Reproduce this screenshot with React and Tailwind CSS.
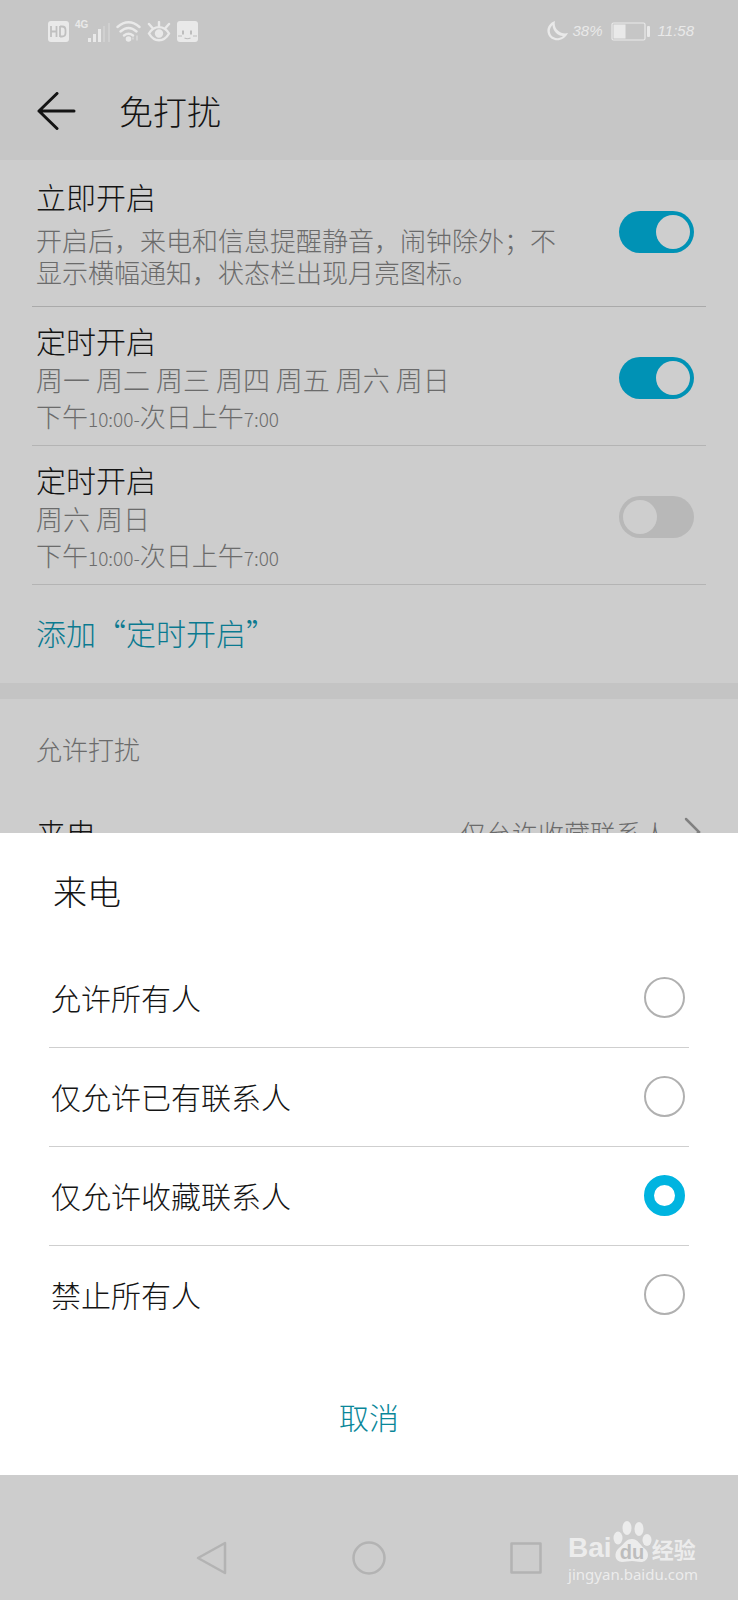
import React, { useState } from 'react';

const schedules = [
  { id: 1, days: '周一 周二 周三 周四 周五 周六 周日', on: true },
  { id: 2, days: '周六 周日', on: false },
];

const callOptions = ['允许所有人', '仅允许已有联系人', '仅允许收藏联系人', '禁止所有人'];

const StatusBar = () => (
  <div className="flex h-[62px] items-center justify-between pl-12 pr-11 text-[#e9e9e9]">
    <div className="flex items-center gap-[6px]">
      {/* HD badge */}
      <svg width="21" height="21" viewBox="0 0 21 21" aria-hidden="true">
        <rect width="21" height="21" rx="3" fill="currentColor" />
        <path d="M3 5v11M8.500 5v11M3 10.500h5.500M12 5v11M12 5.500h2q3.500 0 3.500 3.500v3q0 3.500-3.500 3.500h-2" fill="none" stroke="#c0c0c0" strokeWidth="1.800" />
      </svg>
      {/* signal */}
      <div className="flex h-6 items-end">
        <span className="self-start font-['Liberation_Sans',sans-serif] text-[10px] font-bold leading-3">4G</span>
        <svg width="22" height="20" viewBox="0 0 22 20" className="shrink-0" aria-hidden="true">
          <g fill="currentColor">
            <rect x="0" y="15" width="3" height="4" />
            <rect x="5" y="11" width="3" height="8" />
            <rect x="10" y="6" width="3" height="13" />
            <rect x="15" y="3" width="2" height="16" opacity="0.3" />
            <rect x="20" y="0" width="2" height="19" opacity="0.3" />
          </g>
        </svg>
      </div>
      <svg width="25" height="21" viewBox="0 0 25 21" fill="none" stroke="currentColor" strokeWidth="2.400" strokeLinecap="round" aria-hidden="true">
        <path d="M1.500 6Q12.500-3.500 23.500 6M4.500 10.500q8-7 16 0M8 14.500q4.500-3.500 9 0" />
        <circle cx="12.500" cy="18" r="1.600" fill="currentColor" />
        <path d="M17 18v-1M21 19v-4" strokeWidth="1.500" opacity="0.600" />
      </svg>
      <svg width="24" height="21" viewBox="0 0 24 21" fill="none" stroke="currentColor" strokeWidth="2.400" strokeLinecap="round" aria-hidden="true">
        <path d="M2 12.500C7 4 17 4 22 12.500C17 21.500 7 21.500 2 12.500zM12 5V1M5.500 7 2 3M18.500 7 22 3" />
        <circle cx="12" cy="12.500" r="3" fill="currentColor" />
      </svg>
      <svg width="21" height="21" viewBox="0 0 21 21" aria-hidden="true">
        <rect width="21" height="21" rx="3" fill="currentColor" />
        <path d="M6 9.500v4M14 9.500v4" stroke="#bdbdbd" strokeWidth="2" />
        <path d="M1 15h4M16 15h4M7.500 17q3 1.500 6 0" stroke="#bdbdbd" strokeWidth="1.200" fill="none" />
      </svg>
    </div>
    <div className="flex items-center gap-2 font-['Liberation_Sans',sans-serif] text-[15px] italic">
      <div className="flex items-center gap-1">
        <svg width="22" height="20" viewBox="0 0 22 20" fill="currentColor" aria-hidden="true">
          <path fillRule="evenodd" d="M8 0C2 2-1 8 1 13c3 8 15 9 20-1-7 2-15-4-13-12zM5.500 4C2.500 7 2 11 4 14c3 4 9 4 12 1C10 14.500 6 10 5.500 4z" />
        </svg>
        <span>38%</span>
      </div>
      <svg width="39" height="19" viewBox="0 0 39 19" aria-hidden="true">
        <rect x="1" y="1" width="33" height="17" rx="1.500" fill="none" stroke="currentColor" strokeWidth="1.200" />
        <rect x="2.500" y="2.500" width="12" height="14" fill="currentColor" />
        <rect x="36" y="4" width="3" height="11" rx="1" fill="currentColor" />
      </svg>
      <span>11:58</span>
    </div>
  </div>
);

const Toggle = ({ id, defaultChecked }) => (
  <input
    id={id}
    type="checkbox"
    role="switch"
    defaultChecked={defaultChecked}
    className="flex h-[42px] w-[75px] shrink-0 cursor-pointer appearance-none items-center rounded-full bg-[#b8b8b8] p-1 before:h-[34px] before:w-[34px] before:rounded-full before:bg-[#cecece] checked:justify-end checked:bg-[#0092b5]"
  />
);

// digits run narrower than the characters around them
const Time = ({ children }) => <span className="text-[19px] leading-none">{children}</span>;

const ScheduleRow = ({ item }) => (
  <div className="flex items-center justify-between border-b border-[#b4b4b4] pb-[11px] pl-1 pr-3 pt-[15px]">
    <label htmlFor={`schedule-${item.id}`}>
      <span className="block text-[30px] leading-9 text-[#141414]">定时开启</span>
      <span className="mt-1 block text-[27px] leading-9 text-[#6b6b6b]">{item.days}</span>
      <span className="block text-[26px] leading-9 text-[#6b6b6b]">
        下午<Time>10:00-</Time>次日上午<Time>7:00</Time>
      </span>
    </label>
    <Toggle id={`schedule-${item.id}`} defaultChecked={item.on} />
  </div>
);

const Watermark = () => (
  <div className="absolute bottom-4 right-10 text-[#ececec]">
    <div className="flex items-end">
      <span className="font-['Liberation_Sans',sans-serif] text-[28px] font-bold leading-8">Bai</span>
      <svg width="40" height="44" viewBox="0 0 40 44" className="shrink-0" aria-hidden="true">
        <g fill="currentColor">
          <ellipse cx="6" cy="18" rx="4.500" ry="6.500" />
          <ellipse cx="15" cy="8" rx="4.500" ry="7" />
          <ellipse cx="27" cy="9" rx="4.500" ry="7" />
          <ellipse cx="35" cy="20" rx="4.500" ry="6" />
          <path d="M20 19c6 0 8 6 12 9 7 5 4 14-3 14-4 0-5-1-9-1s-6 1-10 1c-7 0-9-9-3-14 5-4 7-9 13-9z" />
        </g>
        <text x="20" y="39" textAnchor="middle" fontFamily="Liberation Sans" fontWeight="bold" fontSize="20" fill="#bdbdbd">du</text>
      </svg>
      <span className="text-[22px] font-bold leading-8">经验</span>
    </div>
    <p className="font-['Noto_Sans','Open_Sans',sans-serif] text-[15px] font-normal leading-5">jingyan.baidu.com</p>
  </div>
);

const App = () => {
  const [selected, setSelected] = useState('仅允许收藏联系人');

  return (
    <div className="relative min-h-screen overflow-hidden bg-[#cdcdcd] font-['Noto_Sans_CJK_SC',sans-serif] font-light text-[#141414]">
      {/* Header */}
      <header className="bg-[#c6c6c6]">
        <StatusBar />
        <div className="flex h-[98px] items-center gap-[42px] pl-[37px]">
          <button aria-label="返回" className="cursor-pointer">
            <svg width="40" height="38" viewBox="0 0 40 38" fill="none" stroke="#141414" strokeWidth="3" strokeLinecap="round" strokeLinejoin="round">
              <path d="M20 1.500 2 19l18 17.500M2 19h35" />
            </svg>
          </button>
          <h1 className="text-[34px] leading-[44px]">免打扰</h1>
        </div>
      </header>

      <main>
        <section className="px-8">
          <div className="flex items-center justify-between gap-12 border-b border-[#aaaaaa] pb-[18px] pl-1 pr-3 pt-4">
            <label htmlFor="dnd-now">
              <span className="block text-[30px] leading-10">立即开启</span>
              <span className="mt-2 block text-[26px] leading-8 text-[#6b6b6b]">
                开启后，来电和信息提醒静音，闹钟除外；不显示横幅通知，状态栏出现月亮图标。
              </span>
            </label>
            <Toggle id="dnd-now" defaultChecked />
          </div>
          {schedules.map((item) => (
            <ScheduleRow key={item.id} item={item} />
          ))}
          <button className="block h-[98px] cursor-pointer pb-1 pl-1 text-left text-[30px] text-[#0b7a90]">添加“定时开启”</button>
        </section>

        <div className="h-4 bg-[#c4c4c4]" />

        <section className="px-8">
          <h2 className="pl-1 pt-8 text-[26px] leading-9 text-[#6b6b6b]">允许打扰</h2>
          <button className="flex h-[130px] w-full cursor-pointer items-center justify-between pl-1 pr-1">
            <span className="text-[30px]">来电</span>
            <span className="flex items-center gap-4 text-[26px] text-[#6b6b6b]">
              仅允许收藏联系人
              <svg width="18" height="30" viewBox="0 0 18 30" fill="none" stroke="#808080" strokeWidth="2.500" strokeLinecap="round" aria-hidden="true">
                <path d="M2 2 15 15 2 28" />
              </svg>
            </span>
          </button>
        </section>
      </main>

      {/* Bottom sheet with the system navigation under it */}
      <div className="absolute inset-x-0 bottom-0">
        <div role="dialog" aria-labelledby="sheet-title" className="bg-white">
          <h2 id="sheet-title" className="px-[53px] pb-9 pt-9 text-[34px] leading-[44px]">来电</h2>
          <div role="radiogroup" aria-labelledby="sheet-title" className="divide-y divide-[#cfcfcf] px-[49px]">
            {callOptions.map((option) => (
              <label key={option} className="flex h-[99px] cursor-pointer items-center justify-between pb-0.5 pl-[2px] pr-1 text-[30px]">
                {option}
                <input
                  type="radio"
                  name="calls"
                  checked={selected === option}
                  onChange={() => setSelected(option)}
                  className="h-[41px] w-[41px] shrink-0 cursor-pointer appearance-none rounded-full border-2 border-[#b0b0b0] checked:border-[10px] checked:border-[#00b4e0]"
                />
              </label>
            ))}
          </div>
          <div className="flex justify-center pb-[37px] pt-[49px]">
            <button onClick={() => setSelected('仅允许收藏联系人')} className="cursor-pointer text-[30px] leading-[44px] text-[#0a8799]">取消</button>
          </div>
        </div>

        <nav className="relative flex h-[125px] items-end justify-center gap-[123px] bg-[#cdcdcd] pb-6">
          <button aria-label="后退" className="cursor-pointer">
            <svg width="34" height="36" viewBox="0 0 34 36" fill="none" stroke="#b3b3b3" strokeWidth="2.500" strokeLinejoin="round">
              <path d="M30 3v30L3 18z" />
            </svg>
          </button>
          <button aria-label="主页" className="cursor-pointer">
            <svg width="34" height="36" viewBox="0 0 34 36" fill="none" stroke="#b3b3b3" strokeWidth="2.500">
              <circle cx="17" cy="18" r="15.500" />
            </svg>
          </button>
          <button aria-label="最近任务" className="cursor-pointer">
            <svg width="34" height="36" viewBox="0 0 34 36" fill="none" stroke="#b3b3b3" strokeWidth="2.500" strokeLinejoin="round">
              <rect x="2.500" y="3.500" width="29" height="29" />
            </svg>
          </button>
          <Watermark />
        </nav>
      </div>
    </div>
  );
};

export default App;
